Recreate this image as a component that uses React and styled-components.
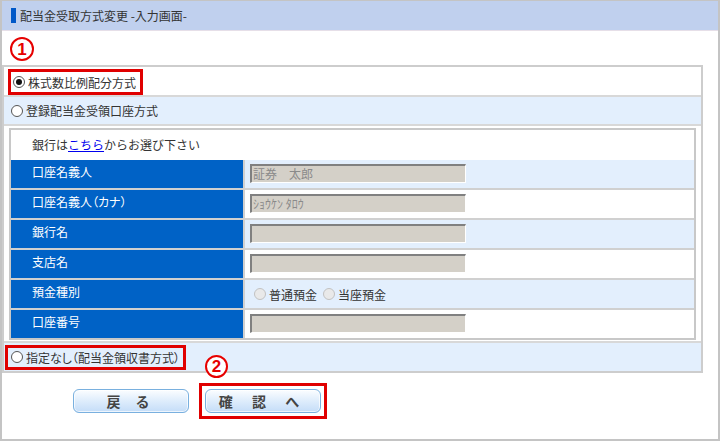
import React from "react";
import styled, { createGlobalStyle } from "styled-components";

const GlobalStyle = createGlobalStyle`
  html, body { margin: 0; padding: 0; background: #fff; }
  body { font-family: "Noto Sans CJK JP", "Liberation Sans", sans-serif; font-size: 12px; color: #333; }
  * { box-sizing: border-box; }
`;

const Frame = styled.div`
  width: 720px;
  height: 441px;
  border: 2px solid #c4c4c4;
  border-top-width: 1px;
  background: #fff;
`;

const Header = styled.div`
  height: 30px;
  background: #c0d0ee;
  display: flex;
  align-items: center;
  padding-left: 9px;
  gap: 4px;
  font-size: 12px;
  color: #333;
  border-bottom: 1px solid #e6dfe8;
`;

const Marker = styled.span`
  width: 5px;
  height: 15px;
  background: #0058c8;
`;

const BadgeRow = styled.div`
  height: 34px;
  padding: 6px 0 0 8px;
`;

const Badge = styled.span`
  display: inline-flex;
  align-items: center;
  justify-content: center;
  width: ${(p) => p.size || 24}px;
  height: ${(p) => p.size || 24}px;
  border: 2px solid #e60000;
  border-radius: 50%;
  color: #e60000;
  font-family: "Liberation Sans", sans-serif;
  font-weight: bold;
  font-size: 17px;
  line-height: 1;
`;

const Box = styled.div`
  width: 701px;
  border: 2px solid #cdcdcd;
  background: #d8d8d8;
  display: flex;
  flex-direction: column;
  gap: 2px;
`;

const Row = styled.div`
  height: ${(p) => p.h || 28}px;
  background: ${(p) => (p.tint ? "#e3effd" : "#fff")};
  display: flex;
  align-items: ${(p) => p.align || "center"};
  padding-left: ${(p) => p.pl || 0}px;
`;

const Highlight = styled.div`
  display: inline-flex;
  align-items: center;
  gap: 3px;
  border: 3px solid #e00000;
  padding: ${(p) => p.pad || "0 4px 0 2px"};
  height: ${(p) => p.h || 25}px;
`;

const Narrow = styled.span`
  font-feature-settings: "palt";
`;

const Radio = styled.span`
  display: inline-block;
  width: 12px;
  height: 12px;
  border-radius: 50%;
  border: 1px solid ${(p) => (p.disabled ? "#c2c2c2" : "#555")};
  background: ${(p) => (p.disabled ? "#e9e9e9" : "#fff")};
  position: relative;
  flex: none;
  &::after {
    content: "";
    display: ${(p) => (p.checked ? "block" : "none")};
    position: absolute;
    left: 2px;
    top: 2px;
    width: 6px;
    height: 6px;
    border-radius: 50%;
    background: #111;
  }
`;

const Panel = styled.div`
  background: #fff;
  padding: 2px 5px 1px 5px;
`;

const Table = styled.div`
  border: 2px solid #c8c8c8;
  background: #d0d0d0;
  display: grid;
  grid-template-columns: 232px 1fr;
  grid-auto-rows: 28px;
  gap: 2px;
`;

const Intro = styled.div`
  grid-column: 1 / -1;
  height: 30px;
  background: #fff;
  padding: 6px 0 0 21px;
  line-height: 18px;
  color: #333;
  a { color: #0000ee; text-decoration: underline; }
`;

const Label = styled.div`
  background: #0062c6;
  color: #fff;
  padding: 3px 0 0 21px;
  line-height: 18px;
`;

const Value = styled.div`
  background: ${(p) => (p.tint ? "#e3effd" : "#fff")};
  padding: ${(p) => (p.radios ? "0 0 0 9px" : "4px 0 0 5px")};
  display: flex;
  align-items: ${(p) => (p.radios ? "center" : "flex-start")};
  gap: 3px;
`;

const Field = styled.div`
  width: 216px;
  height: 19px;
  background: #d4d0c8;
  border-style: solid;
  border-width: 2px 1px 1px 2px;
  border-color: #808080 #fff #fff #808080;
  color: #8a8a8a;
  font-size: 12px;
  line-height: 15px;
  padding-left: 1px;
  white-space: pre;
`;

const RadioText = styled.span`
  margin-right: 3px;
  color: #333;
`;

const Actions = styled.div`
  display: flex;
  align-items: center;
  gap: 10px;
  margin-top: 10px;
  padding-left: 71px;
`;

const Callout = styled.div`
  position: relative;
  border: 3px solid #e00000;
  padding: 3px;
`;

const CalloutBadge = styled.div`
  position: absolute;
  left: 3px;
  top: -31px;
  background: #fff;
  border-radius: 50%;
`;

const Button = styled.button`
  width: 116px;
  height: 24px;
  border: 1px solid #79b0df;
  border-radius: 6px;
  background: linear-gradient(#fbfdff 0%, #e1eefc 45%, #c4ddf8 100%);
  box-shadow: inset 0 0 0 1px rgba(255, 255, 255, 0.7);
  font-family: "Noto Sans CJK JP", sans-serif;
  font-weight: bold;
  font-size: 14px;
  color: #444;
  letter-spacing: ${(p) => p.spacing || 6}px;
  padding: 0;
  line-height: 20px;
  cursor: pointer;
`;

const rows = [
  { label: "口座名義人", value: "証券　太郎" },
  { label: "口座名義人（カナ）", value: "ｼｮｳｹﾝ ﾀﾛｳ" },
  { label: "銀行名", value: "" },
  { label: "支店名", value: "" },
  { label: "預金種別", radios: ["普通預金", "当座預金"] },
  { label: "口座番号", value: "" },
];

export default function App() {
  return (
    <Frame>
      <GlobalStyle />
      <Header>
        <Marker />
        <span>配当金受取方式変更 -入力画面-</span>
      </Header>
      <BadgeRow>
        <Badge>1</Badge>
      </BadgeRow>
      <Box>
        <Row pl={4} align="flex-end">
          <Highlight h={26}>
            <Radio checked />
            <span>株式数比例配分方式</span>
          </Highlight>
        </Row>
        <Row tint h={27} pl={7}>
          <Radio />
          <span style={{ marginLeft: 3 }}>登録配当金受領口座方式</span>
        </Row>
        <Panel>
          <Table>
            <Intro>
              銀行は<a href="#">こちら</a>からお選び下さい
            </Intro>
            {rows.map((r, i) => (
              <React.Fragment key={r.label}>
                <Label>
                  <Narrow>{r.label}</Narrow>
                </Label>
                {r.radios ? (
                  <Value tint={i % 2 === 0} radios>
                    {r.radios.map((t) => (
                      <React.Fragment key={t}>
                        <Radio disabled />
                        <RadioText>{t}</RadioText>
                      </React.Fragment>
                    ))}
                  </Value>
                ) : (
                  <Value tint={i % 2 === 0}>
                    <Field>{r.value}</Field>
                  </Value>
                )}
              </React.Fragment>
            ))}
          </Table>
        </Panel>
        <Row tint pl={1}>
          <Highlight h={25} pad="0 3px 0 3px">
            <Radio />
            <Narrow>指定なし（配当金領収書方式）</Narrow>
          </Highlight>
        </Row>
      </Box>
      <Actions>
        <Button spacing={6}>戻 る</Button>
        <Callout>
          <CalloutBadge>
            <Badge size={23}>2</Badge>
          </CalloutBadge>
          <Button spacing={8}>確 認 へ</Button>
        </Callout>
      </Actions>
    </Frame>
  );
}
